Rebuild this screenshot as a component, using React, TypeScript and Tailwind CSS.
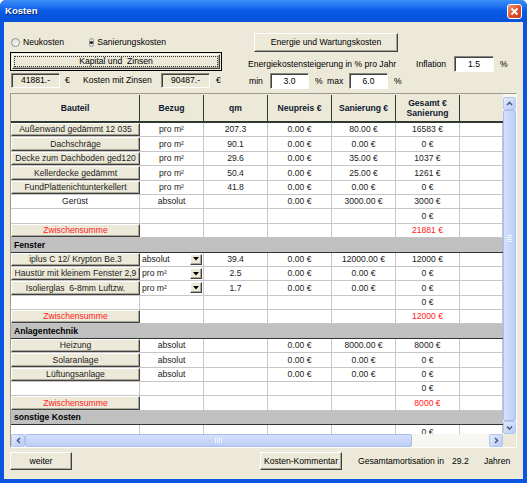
import React from 'react'

type Item = {
  kind: 'item'
  name?: string
  btn?: boolean
  sum?: boolean
  bezug?: string
  combo?: boolean
  qm?: string
  neu?: string
  san?: string
  ges?: string
}
type Band = { kind: 'band'; label: string }
type Row = Item | Band

const rows: Row[] = [
  { kind: 'item', name: 'Außenwand gedämmt 12 035', btn: true, bezug: 'pro m²', qm: '207.3', neu: '0.00 €', san: '80.00 €', ges: '16583 €' },
  { kind: 'item', name: 'Dachschräge', btn: true, bezug: 'pro m²', qm: '90.1', neu: '0.00 €', san: '0.00 €', ges: '0 €' },
  { kind: 'item', name: 'Decke zum Dachboden ged120', btn: true, bezug: 'pro m²', qm: '29.6', neu: '0.00 €', san: '35.00 €', ges: '1037 €' },
  { kind: 'item', name: 'Kellerdecke gedämmt', btn: true, bezug: 'pro m²', qm: '50.4', neu: '0.00 €', san: '25.00 €', ges: '1261 €' },
  { kind: 'item', name: 'FundPlattenichtunterkellert', btn: true, bezug: 'pro m²', qm: '41.8', neu: '0.00 €', san: '0.00 €', ges: '0 €' },
  { kind: 'item', name: 'Gerüst', bezug: 'absolut', neu: '0.00 €', san: '3000.00 €', ges: '3000 €' },
  { kind: 'item', ges: '0 €' },
  { kind: 'item', name: 'Zwischensumme', btn: true, sum: true, ges: '21881 €' },
  { kind: 'band', label: 'Fenster' },
  { kind: 'item', name: 'iplus C 12/ Krypton Be.3', btn: true, combo: true, bezug: 'absolut', qm: '39.4', neu: '0.00 €', san: '12000.00 €', ges: '12000 €' },
  { kind: 'item', name: 'Haustür mit kleinem Fenster 2,9', btn: true, combo: true, bezug: 'pro m²', qm: '2.5', neu: '0.00 €', san: '0.00 €', ges: '0 €' },
  { kind: 'item', name: 'Isolierglas  6-8mm Luftzw.', btn: true, combo: true, bezug: 'pro m²', qm: '1.7', neu: '0.00 €', san: '0.00 €', ges: '0 €' },
  { kind: 'item', ges: '0 €' },
  { kind: 'item', name: 'Zwischensumme', btn: true, sum: true, ges: '12000 €' },
  { kind: 'band', label: 'Anlagentechnik' },
  { kind: 'item', name: 'Heizung', btn: true, bezug: 'absolut', neu: '0.00 €', san: '8000.00 €', ges: '8000 €' },
  { kind: 'item', name: 'Solaranlage', btn: true, bezug: 'absolut', neu: '0.00 €', san: '0.00 €', ges: '0 €' },
  { kind: 'item', name: 'Lüftungsanlage', btn: true, bezug: 'absolut', neu: '0.00 €', san: '0.00 €', ges: '0 €' },
  { kind: 'item', ges: '0 €' },
  { kind: 'item', name: 'Zwischensumme', btn: true, sum: true, ges: '8000 €' },
  { kind: 'band', label: 'sonstige Kosten' },
  { kind: 'item', ges: '0 €' },
]

const BTN =
  'bg-[#ECE9D8] border border-t-white border-l-white border-r-[#404040] border-b-[#404040] shadow-[inset_-1px_-1px_0_#aca899]'
const FIELD =
  'border border-t-[#8a877c] border-l-[#8a877c] border-r-white border-b-white shadow-[inset_1px_1px_0_#404040] flex items-center justify-center'

function Radio({ checked, label }: { checked?: boolean; label: string }) {
  return (
    <div className="w-[78px] pl-[1px] flex items-center gap-[3px]">
      <span className="w-[9px] h-[9px] rounded-full border border-[#8d9199] bg-gradient-to-br from-[#dcdbd3] to-white flex items-center justify-center">
        {checked && <span className="w-[3px] h-[3px] rounded-full bg-[#151515]" />}
      </span>
      <span>{label}</span>
    </div>
  )
}

function Arrow({ dir }: { dir: 'up' | 'down' | 'left' | 'right' }) {
  const d = {
    up: 'M2 6 L4.5 3.5 L7 6',
    down: 'M2 3.5 L4.5 6 L7 3.5',
    left: 'M6 2 L3.5 4.5 L6 7',
    right: 'M3 2 L5.5 4.5 L3 7',
  }[dir]
  return (
    <svg width="9" height="9" viewBox="0 0 9 9">
      <path d={d} fill="none" stroke="#4d6185" strokeWidth="1.6" />
    </svg>
  )
}

const SBTN =
  'rounded-[2px] border border-[#b4c6f0] bg-gradient-to-br from-[#e3ebfe] to-[#b8cbf5] flex items-center justify-center shrink-0'

function TableRow({ r }: { r: Row }) {
  if (r.kind === 'band') {
    return (
      <div className="h-[14.4px] shrink-0 flex items-center bg-[#c0c0c0] border-b border-[#2f3530] pl-[3px] font-bold text-black">
        {r.label}
      </div>
    )
  }
  const base = 'h-full shrink-0 border-r border-[#c6c6c6] flex items-center'
  const cell = `${base} justify-center`
  return (
    <div className="h-[14.4px] shrink-0 flex bg-white border-b border-[#c6c6c6] text-[#222]">
      {r.btn ? (
        <div className={`w-[129px] h-full shrink-0 flex items-center justify-center whitespace-pre ${BTN} ${r.sum ? 'text-[#ff2020]' : ''}`}>
          {r.name}
        </div>
      ) : (
        <div className={`w-[129px] ${cell}`}>{r.name}</div>
      )}
      {r.combo ? (
        <div className={`w-[64px] ${base} justify-between pl-[2px] pr-[1px]`}>
          <span>{r.bezug}</span>
          <span className={`w-[12px] h-[11px] flex items-center justify-center ${BTN}`}>
            <svg width="6" height="4" viewBox="0 0 6 4">
              <path d="M0 0 H6 L3 3.5 Z" fill="#000" />
            </svg>
          </span>
        </div>
      ) : (
        <div className={`w-[64px] ${cell}`}>{r.bezug}</div>
      )}
      <div className={`w-[64px] ${cell}`}>{r.qm}</div>
      <div className={`w-[64px] ${cell}`}>{r.neu}</div>
      <div className={`w-[64px] ${cell}`}>{r.san}</div>
      <div className={`w-[64px] ${cell} ${r.sum ? 'text-[#ff2020]' : ''}`}>{r.ges}</div>
      <div className={`w-[43px] ${cell}`} />
    </div>
  )
}

export default function App() {
  const head = 'h-full shrink-0 border-r border-[#2f3a33] flex items-center justify-center text-center font-bold text-[#101830] leading-[10px]'
  return (
    <div className="w-[527px] h-[483px] flex flex-col bg-[#0a55e2] rounded-t-[6px] overflow-hidden font-['Liberation_Sans',Arial,sans-serif] text-[8.6px] text-black leading-none">
      {/* title bar */}
      <div className="h-[22px] shrink-0 flex items-center bg-gradient-to-b from-[#3d8ff9] via-[#0a5ae6] to-[#0651d8] pl-[5px] pr-[5px]">
        <span className="text-white font-bold text-[9.6px] [text-shadow:1px_1px_0_#0a246a]">Kosten</span>
        <div className="ml-auto w-[15px] h-[15px] rounded-[3px] border border-white bg-gradient-to-br from-[#f09a7c] via-[#e0512e] to-[#c5391a] flex items-center justify-center">
          <svg width="9" height="9" viewBox="0 0 9 9">
            <path d="M1.5 1.5 L7.5 7.5 M7.5 1.5 L1.5 7.5" stroke="#fff" strokeWidth="1.8" />
          </svg>
        </div>
      </div>

      {/* body */}
      <div className="flex-1 mx-[4px] mb-[4px] bg-[#ECE9D8] flex flex-col">
        <div className="h-[71px] shrink-0 flex">
          <div className="ml-[6px] w-[212px] flex flex-col">
            <div className="mt-[15px] h-[10px] flex items-center">
              <Radio label="Neukosten" />
              <Radio label="Sanierungskosten" checked />
            </div>
            <div className="mt-[5px] h-[19px] border border-black p-[1px]">
              <div className={`h-full ${BTN} flex items-center justify-center`}>
                <span className="border border-dotted border-[#333] w-[204px] h-[11px] flex items-center justify-center">
                  Kapital und&nbsp; Zinsen
                </span>
              </div>
            </div>
            <div className="mt-[2px] h-[15px] flex items-center">
              <div className={`ml-[1px] w-[49px] h-full ${FIELD}`}>41881.-</div>
              <span className="w-[23px] pl-[5px]">€</span>
              <span className="w-[78px]">Kosten mit Zinsen</span>
              <div className={`w-[49px] h-full ${FIELD}`}>90487.-</div>
              <span className="pl-[6px]">€</span>
            </div>
          </div>
          <div className="ml-[26px] flex-1 flex flex-col">
            <div className={`ml-[6px] mt-[11px] w-[144px] h-[19px] ${BTN} flex items-center justify-center`}>
              Energie und Wartungskosten
            </div>
            <div className="mt-[4px] h-[16px] flex items-center">
              <span className="w-[168px]">Energiekostensteigerung in % pro Jahr</span>
              <span className="w-[38px]">Inflation</span>
              <div className={`w-[40px] h-full bg-white ${FIELD}`}>1.5</div>
              <span className="pl-[6px]">%</span>
            </div>
            <div className="mt-[1px] h-[16px] flex items-center">
              <span className="w-[22px] pl-[1px]">min</span>
              <div className={`w-[39px] h-full bg-white ${FIELD}`}>3.0</div>
              <span className="w-[18px] pl-[6px]">%</span>
              <span className="w-[22px]">max</span>
              <div className={`w-[39px] h-full bg-white ${FIELD}`}>6.0</div>
              <span className="pl-[6px]">%</span>
            </div>
          </div>
        </div>

        {/* table frame */}
        <div className="ml-[6px] w-[507px] h-[355px] shrink-0 flex border border-t-[#9d9a8e] border-l-[#9d9a8e] border-r-white border-b-white">
          <div className="w-[492px] flex flex-col">
            <div className="h-[340px] flex flex-col overflow-hidden bg-white">
              <div className="h-[29px] shrink-0 flex bg-[#ECE9D8] border-t border-[#ECE9D8] border-b-2 border-b-[#2f3a33]">
                <div className={`w-[129px] ${head}`}>Bauteil</div>
                <div className={`w-[64px] ${head}`}>Bezug</div>
                <div className={`w-[64px] ${head}`}>qm</div>
                <div className={`w-[64px] ${head}`}>Neupreis €</div>
                <div className={`w-[64px] ${head}`}>Sanierung €</div>
                <div className={`w-[64px] ${head}`}>
                  Gesamt €<br />
                  Sanierung
                </div>
                <div className="w-[43px] h-full" />
              </div>
              {rows.map((r, i) => (
                <TableRow key={i} r={r} />
              ))}
            </div>
            <div className="h-[13px] flex bg-[#f7f6f1]">
              <div className={`w-[14px] ${SBTN}`}>
                <Arrow dir="left" />
              </div>
              <div className="w-[387px] rounded-[2px] border border-[#a9bdec] bg-gradient-to-b from-[#d5e0fd] to-[#bccdf6] flex items-center justify-center">
                <div className="flex gap-[1px]">
                  <span className="w-[1px] h-[5px] bg-[#eef3fe]" />
                  <span className="w-[1px] h-[5px] bg-[#eef3fe]" />
                  <span className="w-[1px] h-[5px] bg-[#eef3fe]" />
                  <span className="w-[1px] h-[5px] bg-[#eef3fe]" />
                </div>
              </div>
              <div className="flex-1" />
              <div className={`w-[14px] ${SBTN}`}>
                <Arrow dir="right" />
              </div>
            </div>
          </div>
          <div className="w-[13px] flex flex-col">
            <div className="h-[340px] flex flex-col bg-[#f7f6f1] pt-[3px]">
              <div className={`h-[13px] ${SBTN}`}>
                <Arrow dir="up" />
              </div>
              <div className="flex-1 rounded-[2px] border border-[#a9bdec] bg-gradient-to-r from-[#d5e0fd] to-[#bccdf6] flex flex-col items-center pt-[124px]">
                <div className="flex flex-col gap-[1px]">
                  <span className="w-[5px] h-[1px] bg-[#eef3fe]" />
                  <span className="w-[5px] h-[1px] bg-[#eef3fe]" />
                  <span className="w-[5px] h-[1px] bg-[#eef3fe]" />
                  <span className="w-[5px] h-[1px] bg-[#eef3fe]" />
                </div>
              </div>
              <div className={`h-[13px] ${SBTN}`}>
                <Arrow dir="down" />
              </div>
            </div>
            <div className="h-[13px] bg-[#ECE9D8]" />
          </div>
        </div>

        {/* bottom bar */}
        <div className="mt-[4px] h-[18px] shrink-0 flex items-center">
          <div className={`ml-[6px] w-[62px] h-full ${BTN} flex items-center justify-center`}>weiter</div>
          <div className={`ml-[188px] w-[82px] h-full ${BTN} flex items-center justify-center`}>Kosten-Kommentar</div>
          <span className="ml-[16px] w-[94px]">Gesamtamortisation in</span>
          <span className="w-[32px]">29.2</span>
          <span>Jahren</span>
        </div>
      </div>
    </div>
  )
}
